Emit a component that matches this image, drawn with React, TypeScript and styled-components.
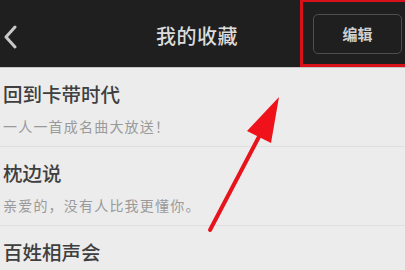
import styled, { createGlobalStyle } from 'styled-components'

const GlobalStyle = createGlobalStyle`
  html, body {
    margin: 0;
    padding: 0;
    background: #ececec;
    font-family: "Noto Sans CJK SC", "Noto Sans", sans-serif;
  }
`

const items = [
  { title: '回到卡带时代', desc: '一人一首成名曲大放送！' },
  { title: '枕边说', desc: '亲爱的，没有人比我更懂你。' },
  { title: '百姓相声会', desc: '' },
]

export default function App() {
  return (
    <Page>
      <GlobalStyle />
      <Header>
        <BackButton aria-label="back">
          <svg width="16" height="24" viewBox="0 0 16 24">
            <path d="M13 2 L4 12 L13 22" fill="none" stroke="#c9c9c9" strokeWidth="3" strokeLinecap="round" strokeLinejoin="round" />
          </svg>
        </BackButton>
        <Title>我的收藏</Title>
        <Highlight>
          <EditButton>编辑</EditButton>
        </Highlight>
      </Header>
      <List>
        {items.map((it) => (
          <Item key={it.title}>
            <ItemTitle>{it.title}</ItemTitle>
            {it.desc && <ItemDesc>{it.desc}</ItemDesc>}
          </Item>
        ))}
      </List>
      <Arrow width="405" height="270" viewBox="0 0 405 270">
        <line x1="210" y1="230" x2="262" y2="131" stroke="#e8141c" strokeWidth="4" strokeLinecap="round" />
        <polygon points="279,97 247,131 271,143" fill="#f0121a" />
      </Arrow>
    </Page>
  )
}

const Page = styled.div`
  position: relative;
  width: 405px;
  height: 270px;
  overflow: hidden;
  background: #ececec;
`

const Header = styled.div`
  display: grid;
  grid-template-columns: 94px 1fr 105px;
  align-items: center;
  height: 68px;
  background: #1f1f1f;
  border-bottom: 1px solid #c4c4c4;
  box-sizing: border-box;
`

const BackButton = styled.div`
  display: flex;
  align-items: center;
  padding-left: 2px;
  margin-top: 6px;
`

const Title = styled.div`
  text-align: center;
  color: #dcdcdc;
  font-size: 20px;
  font-weight: 500;
  letter-spacing: 0.5px;
  margin-top: 4px;
`

const Highlight = styled.div`
  height: 67px;
  box-sizing: border-box;
  border: 3px solid #d8121b;
  border-right: none;
  border-top-width: 2px;
  display: flex;
  align-items: center;
  padding-left: 10px;
  margin-top: -1px;
`

const EditButton = styled.div`
  width: 89px;
  height: 40px;
  box-sizing: border-box;
  border: 1.5px solid #4e4e4e;
  border-radius: 5px;
  display: flex;
  align-items: center;
  justify-content: center;
  color: #d0d0d0;
  font-size: 15px;
  font-weight: 700;
  margin-top: 2px;
`

const List = styled.div`
  display: flex;
  flex-direction: column;
`

const Item = styled.div`
  height: 79px;
  box-sizing: border-box;
  padding: 13px 0 0 3px;
  border-bottom: 1px solid #dfdfdf;
`

const ItemTitle = styled.div`
  font-size: 19.5px;
  font-weight: 500;
  line-height: 26px;
  color: #3f3f3f;
`

const ItemDesc = styled.div`
  margin-top: 9px;
  font-size: 14px;
  letter-spacing: 1.2px;
  line-height: 20px;
  color: #9a9a9a;
`

const Arrow = styled.svg`
  position: absolute;
  left: 0;
  top: 0;
  pointer-events: none;
`
